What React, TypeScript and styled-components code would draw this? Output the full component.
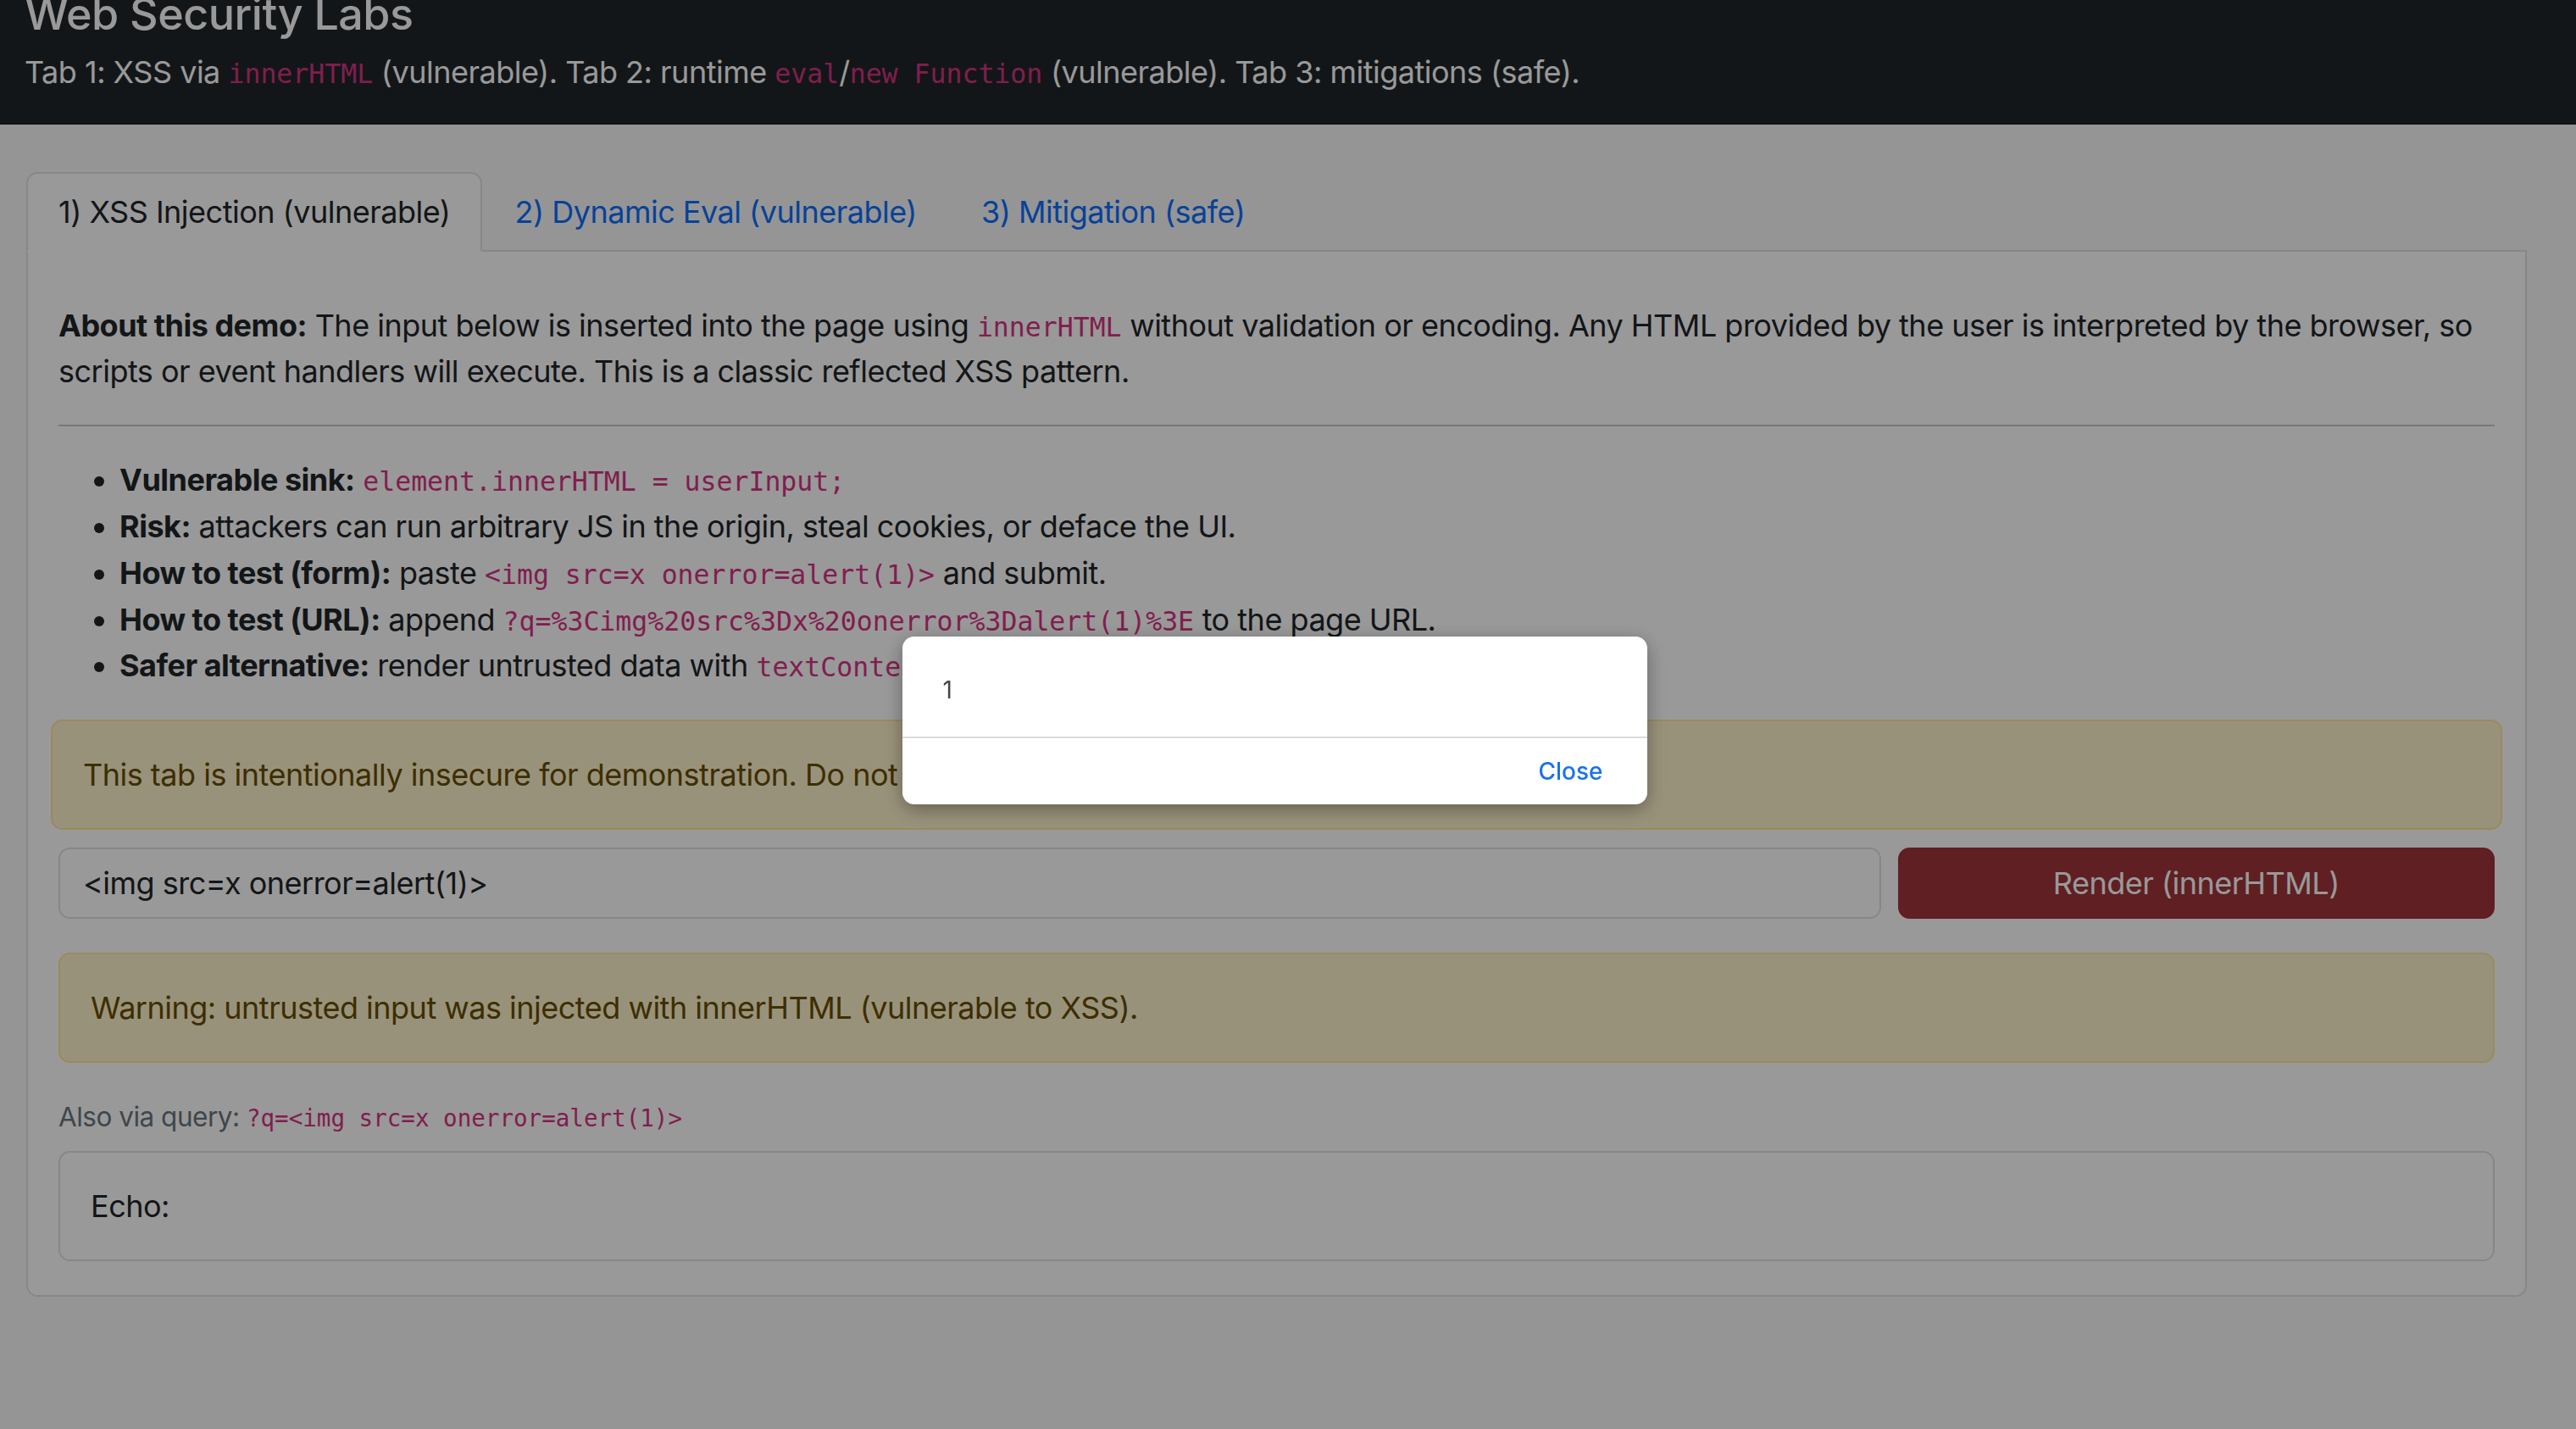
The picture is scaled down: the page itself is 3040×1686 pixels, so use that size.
import React from "react";
import styled, { createGlobalStyle } from "styled-components";

const GlobalStyle = createGlobalStyle`
  * { box-sizing: border-box; }
  html, body {
    margin: 0;
    padding: 0;
    background: #f8f9fa;
  }
  body {
    font-family: Inter, "Liberation Sans", Arial, sans-serif;
    font-size: 36px;
    line-height: 1.5;
    letter-spacing: -0.5px;
    color: #212529;
    overflow: hidden;
  }
`;

const Header = styled.header`
  background: #212529;
  color: #fff;
  padding: 0 29px 35px;
`;

const Title = styled.h1`
  margin: -14px 0 10px;
  font-size: 52px;
  font-weight: 500;
  line-height: 1.2;
`;

const Subtitle = styled.p`
  margin: 0;
  font-size: 36px;
  line-height: 1.5;
`;

const Code = styled.code`
  font-family: "DejaVu Sans Mono", "Liberation Mono", monospace;
  font-size: 0.875em;
  line-height: 1;
  letter-spacing: 0;
  color: #d63384;
`;

const Main = styled.main`
  padding: 56px 58px 0 31px;
`;

const TabList = styled.nav`
  display: flex;
  border-bottom: 2px solid #dee2e6;
`;

const Tab = styled.button<{ $active?: boolean }>`
  font: inherit;
  letter-spacing: inherit;
  line-height: 54px;
  padding: 18px 36px;
  margin-bottom: -2px;
  border: 2px solid transparent;
  border-radius: 13.5px 13.5px 0 0;
  background: ${(p) => (p.$active ? "#fff" : "transparent")};
  border-color: ${(p) => (p.$active ? "#dee2e6 #dee2e6 #fff" : "transparent")};
  color: ${(p) => (p.$active ? "#212529" : "#0d6efd")};
  cursor: pointer;
`;

const Panel = styled.section`
  background: #fff;
  border: 2px solid #dee2e6;
  border-top: 0;
  border-radius: 0 0 13.5px 13.5px;
  padding: 60px 36px 40px;
`;

const Para = styled.p`
  margin: 0 0 36px;
`;

const Rule = styled.hr`
  margin: 0 0 36px;
  border: 0;
  border-top: 2px solid #c8c9ca;
`;

const List = styled.ul`
  margin: 0 0 36px;
  padding-left: 72px;
  line-height: 54.75px;
`;

const Alert = styled.div<{ $wide?: boolean; $gap: number }>`
  background: #fff3cd;
  border: 2px solid #ffe69c;
  color: #664d03;
  border-radius: 13.5px;
  padding: 36px;
  line-height: 54px;
  margin: ${(p) => (p.$wide ? `0 -9px ${p.$gap}px` : `0 0 ${p.$gap}px`)};
`;

const FormRow = styled.form`
  display: grid;
  grid-template-columns: 1fr 24.5%;
  gap: 20px;
  margin-bottom: 40px;
`;

const Input = styled.input`
  font: inherit;
  letter-spacing: inherit;
  line-height: 54px;
  padding: 13px 27px;
  border: 2px solid #dee2e6;
  border-radius: 13.5px;
  color: #212529;
  background: #fff;
  min-width: 0;
`;

const DangerButton = styled.button`
  font: inherit;
  letter-spacing: inherit;
  line-height: 54px;
  padding: 13px 27px;
  border: 2px solid #a03439;
  border-radius: 13.5px;
  background: #a03439;
  color: #fff;
  cursor: pointer;
`;

const Hint = styled.p`
  margin: 0 0 17px;
  font-size: 31.5px;
  line-height: 1.5;
  color: #6c757d;
`;

const EchoBox = styled.div`
  border: 2px solid #dee2e6;
  border-radius: 13.5px;
  padding: 36px;
  line-height: 54px;
`;

const Overlay = styled.div`
  position: fixed;
  inset: 0;
  background: rgba(0, 0, 0, 0.4);
  display: flex;
  justify-content: center;
  align-items: flex-start;
  padding: 751px 32px 0 0;
`;

const Dialog = styled.div`
  width: 879px;
  background: #fff;
  border-radius: 14px;
  box-shadow: 0 6px 22px rgba(0, 0, 0, 0.35);
  overflow: hidden;
  letter-spacing: 0;
`;

const DialogBody = styled.div`
  height: 118px;
  padding: 46px 48px 0;
  font-size: 28px;
  line-height: 34px;
  color: #474747;
`;

const DialogFooter = styled.div`
  height: 80px;
  border-top: 2px solid #dadce0;
  display: flex;
  justify-content: flex-end;
  align-items: center;
  padding-right: 52px;
`;

const CloseButton = styled.button`
  font: inherit;
  font-size: 28px;
  font-weight: 500;
  background: none;
  border: 0;
  padding: 0;
  color: #1a73e8;
  cursor: pointer;
`;

export default function App() {
  return (
    <>
      <GlobalStyle />
      <Header>
        <Title>Web Security Labs</Title>
        <Subtitle>
          Tab 1: XSS via <Code>innerHTML</Code> (vulnerable). Tab 2: runtime <Code>eval</Code>/
          <Code>new Function</Code> (vulnerable). Tab 3: mitigations (safe).
        </Subtitle>
      </Header>
      <Main>
        <TabList>
          <Tab $active>1) XSS Injection (vulnerable)</Tab>
          <Tab>2) Dynamic Eval (vulnerable)</Tab>
          <Tab>3) Mitigation (safe)</Tab>
        </TabList>
        <Panel>
          <Para>
            <strong>About this demo:</strong> The input below is inserted into the page using{" "}
            <Code>innerHTML</Code> without validation or encoding. Any HTML provided by the user is
            interpreted by the browser, so scripts or event handlers will execute. This is a classic
            reflected XSS pattern.
          </Para>
          <Rule />
          <List>
            <li>
              <strong>Vulnerable sink:</strong> <Code>element.innerHTML = userInput;</Code>
            </li>
            <li>
              <strong>Risk:</strong> attackers can run arbitrary JS in the origin, steal cookies, or
              deface the UI.
            </li>
            <li>
              <strong>How to test (form):</strong> paste <Code>{"<img src=x onerror=alert(1)>"}</Code>{" "}
              and submit.
            </li>
            <li>
              <strong>How to test (URL):</strong> append{" "}
              <Code>?q=%3Cimg%20src%3Dx%20onerror%3Dalert(1)%3E</Code> to the page URL.
            </li>
            <li>
              <strong>Safer alternative:</strong> render untrusted data with <Code>textContent</Code> or
              a sanitizer.
            </li>
          </List>
          <Alert $wide $gap={21}>
            This tab is intentionally insecure for demonstration. Do not use this in production.
          </Alert>
          <FormRow onSubmit={(e) => e.preventDefault()}>
            <Input defaultValue="<img src=x onerror=alert(1)>" />
            <DangerButton type="submit">Render (innerHTML)</DangerButton>
          </FormRow>
          <Alert $gap={40}>
            Warning: untrusted input was injected with innerHTML (vulnerable to XSS).
          </Alert>
          <Hint>
            Also via query: <Code>{"?q=<img src=x onerror=alert(1)>"}</Code>
          </Hint>
          <EchoBox>Echo: </EchoBox>
        </Panel>
      </Main>
      <Overlay>
        <Dialog role="alertdialog">
          <DialogBody>1</DialogBody>
          <DialogFooter>
            <CloseButton>Close</CloseButton>
          </DialogFooter>
        </Dialog>
      </Overlay>
    </>
  );
}
